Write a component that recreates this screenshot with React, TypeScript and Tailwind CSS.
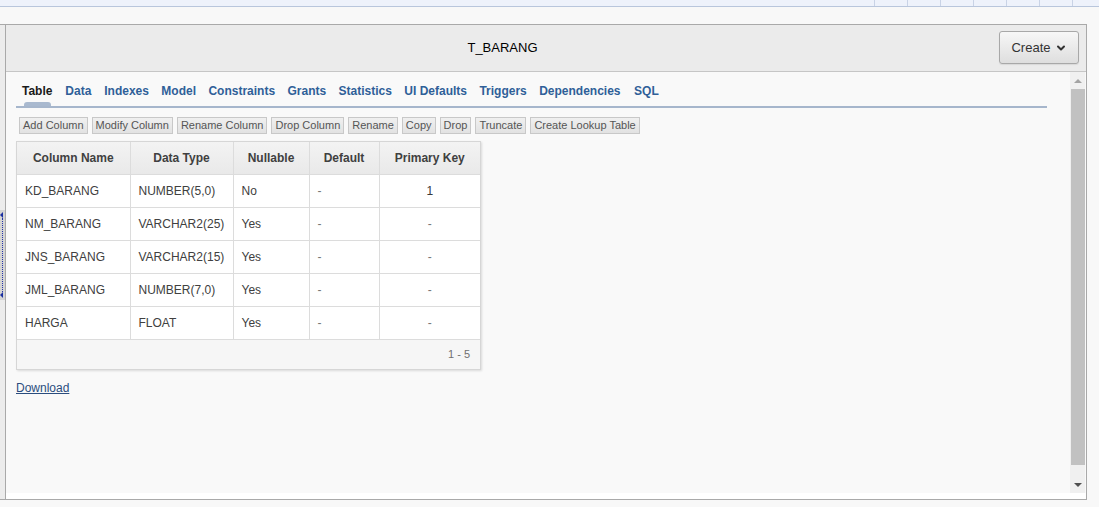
import { ChevronDown } from "lucide-react";

const tabs = ["Table", "Data", "Indexes", "Model", "Constraints", "Grants", "Statistics", "UI Defaults", "Triggers", "Dependencies", "SQL"];
const actions = ["Add Column", "Modify Column", "Rename Column", "Drop Column", "Rename", "Copy", "Drop", "Truncate", "Create Lookup Table"];

const rows = [
  ["KD_BARANG", "NUMBER(5,0)", "No", "-", "1"],
  ["NM_BARANG", "VARCHAR2(25)", "Yes", "-", "-"],
  ["JNS_BARANG", "VARCHAR2(15)", "Yes", "-", "-"],
  ["JML_BARANG", "NUMBER(7,0)", "Yes", "-", "-"],
  ["HARGA", "FLOAT", "Yes", "-", "-"],
];

const App = () => {
  return (
    <div className="w-[1099px] h-[507px] overflow-hidden bg-[#f8f8f8] font-['Liberation_Sans',Arial,sans-serif] text-[#404040]">
      {/* top strip */}
      <div className="h-[7px] flex bg-[#eef2fb] border-b border-[#b9c6dc]">
        <div className="w-[874px]" />
        <div className="w-[33px] border-l border-[#c9d3e6]" />
        <div className="w-[33px] border-l border-[#c9d3e6]" />
        <div className="w-[33px] border-l border-[#c9d3e6]" />
        <div className="w-[33px] border-l border-[#c9d3e6]" />
        <div className="w-[33px] border-l border-[#c9d3e6]" />
        <div className="w-[33px] border-l border-[#c9d3e6]" />
        <div className="flex-1 border-l border-[#c9d3e6]" />
      </div>

      <div className="mt-[17px] w-[1087px] h-[476px] flex border-t border-b border-r border-[#a9a9a9]">
        {/* collapsed left region */}
        <div className="w-[6px] bg-[#ececec] border-r border-[#a9a9a9] flex flex-col">
          <div className="h-[185px]" />
          <div className="h-[90px] w-[5px] bg-[#d4d4d4] flex flex-col items-start py-[2px]">
            <div className="w-0 h-0 border-y-[3px] border-y-transparent border-r-[3px] border-r-[#1a2fa0]" />
            <div className="flex-1 ml-[2px] border-l border-dotted border-[#2233aa]" />
            <div className="w-0 h-0 border-y-[3px] border-y-transparent border-r-[3px] border-r-[#1a2fa0]" />
          </div>
        </div>

        <div className="flex-1 flex flex-col">
          {/* header */}
          <div className="h-[47px] bg-[#ebebeb] border-b border-[#c6c6c6] flex items-center">
            <div className="flex-1 text-center text-[13px] text-black">T_BARANG</div>
            <button className="w-[80px] h-[33px] mr-[7px] mb-[1px] rounded-[3px] border border-[#a8a8a8] bg-gradient-to-b from-[#f7f7f7] to-[#dedede] text-[13px] text-[#333] flex items-center justify-center gap-[4px] shadow-[0_1px_1px_rgba(0,0,0,0.08)]">
              Create
              <ChevronDown size={12} strokeWidth={4} className="text-[#333]" />
            </button>
          </div>

          {/* body */}
          <div className="flex-1 flex bg-[#f9f9f9]">
            <div className="flex-1 pl-[10px] pr-[23px] pt-[12px]">
              <div className="flex gap-[12.4px] pl-[6px] border-b-2 border-[#a6b6cc]">
                {tabs.map((t, i) => (
                  <div key={t} className="flex flex-col items-center">
                    <span className={`text-[12px] leading-[14px] font-bold ${i === 0 ? "text-[#1a1a1a]" : "text-[#2f5f98]"}`}>{t}</span>
                    <div className={`mt-[4px] h-[4px] w-[27px] rounded-t-[3px] ${i === 0 ? "bg-[#a9b9cf]" : ""}`} />
                  </div>
                ))}
              </div>

              <div className="mt-[9px] flex gap-[4px] pl-[3px]">
                {actions.map((a) => (
                  <button key={a} className="h-[17px] px-[3px] border border-[#c8c8c8] bg-gradient-to-b from-[#f0f0f0] to-[#e2e2e2] text-[11px] leading-[15px] text-[#555]">
                    {a}
                  </button>
                ))}
              </div>

              <div className="mt-[7px] w-[465px] border border-[#d6d6d6] shadow-[1px_1px_2px_rgba(0,0,0,0.12)] bg-white">
                <table className="w-full table-fixed border-collapse text-[12px] text-[#404040]">
                  <colgroup>
                    <col className="w-[113px]" />
                    <col className="w-[103px]" />
                    <col className="w-[76px]" />
                    <col className="w-[70px]" />
                    <col />
                  </colgroup>
                  <thead>
                    <tr className="h-[32px] bg-gradient-to-b from-[#f3f3f3] to-[#e9e9e9]">
                      <th className="p-0 border-r border-b border-[#dcdcdc] font-bold text-center">Column Name</th>
                      <th className="p-0 border-r border-b border-[#dcdcdc] font-bold text-center">Data Type</th>
                      <th className="p-0 border-r border-b border-[#dcdcdc] font-bold text-center">Nullable</th>
                      <th className="p-0 border-r border-b border-[#dcdcdc] font-bold text-center">Default</th>
                      <th className="p-0 border-b border-[#dcdcdc] font-bold text-center">Primary Key</th>
                    </tr>
                  </thead>
                  <tbody>
                    {rows.map((r) => (
                      <tr key={r[0]} className="h-[33px]">
                        <td className="p-0 border-r border-b border-[#dcdcdc] pl-[8px]">{r[0]}</td>
                        <td className="p-0 border-r border-b border-[#dcdcdc] pl-[8px]">{r[1]}</td>
                        <td className="p-0 border-r border-b border-[#dcdcdc] pl-[8px]">{r[2]}</td>
                        <td className="p-0 border-r border-b border-[#dcdcdc] pl-[8px] text-[#777]">{r[3]}</td>
                        <td className={`p-0 border-b border-[#dcdcdc] text-center ${r[4] === "-" ? "text-[#777]" : "text-[#3a3a3a]"}`}>{r[4]}</td>
                      </tr>
                    ))}
                  </tbody>
                </table>
                <div className="h-[29px] bg-[#f6f6f6] flex items-center justify-end pr-[10px] text-[11px] text-[#707070]">1 - 5</div>
              </div>

              <a href="#" className="block mt-[9px] w-fit text-[12px] text-[#2b4d7e] underline">Download</a>
            </div>

            {/* scrollbar */}
            <div className="w-[15px] mr-[1px] bg-[#f0f0f0] flex flex-col items-center">
              <div className="h-[17px] flex items-center justify-center">
                <div className="w-0 h-0 border-x-[4px] border-x-transparent border-b-[4px] border-b-[#a3a3a3]" />
              </div>
              <div className="w-[14px] h-[376px] bg-[#c1c1c1]" />
              <div className="flex-1" />
              <div className="h-[17px] flex items-center justify-center">
                <div className="w-0 h-0 border-x-[4px] border-x-transparent border-t-[4px] border-t-[#505050]" />
              </div>
            </div>
          </div>
          <div className="h-[6px] bg-white" />
        </div>
      </div>
    </div>
  );
};

export default App;
